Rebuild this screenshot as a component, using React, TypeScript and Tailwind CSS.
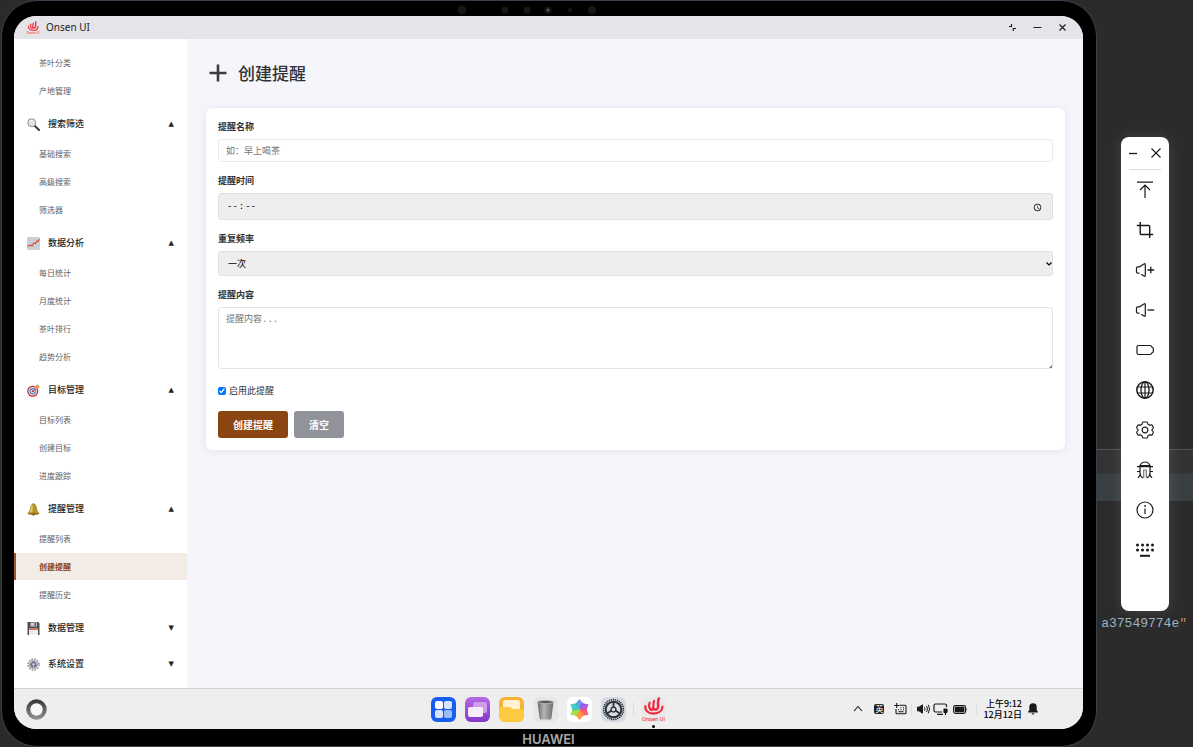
import React from "react";

type MenuGroup = {
  title?: string;
  icon?: React.ReactNode;
  open: boolean;
  items: string[];
};

type ToolProps = {
  label: string;
  children: React.ReactNode;
};

const Emoji = ({ children }: { children: React.ReactNode }) => (
  <svg viewBox="0 0 26 26" className="size-[13px] shrink-0" aria-hidden="true">
    {children}
  </svg>
);

const SearchEmoji = () => (
  <Emoji>
    <path d="M15 15l9 9" stroke="#3a3a3c" strokeWidth="4" strokeLinecap="round" />
    <circle cx="9.5" cy="9.5" r="8" fill="#dfe3e6" stroke="#8d9194" strokeWidth="2" />
    <path d="M5 9a5 5 0 0 1 5-4.5" stroke="#fff" strokeWidth="1.6" fill="none" />
  </Emoji>
);

const ChartEmoji = () => (
  <Emoji>
    <rect width="26" height="26" rx="2" fill="#cdd1dc" />
    <path d="M0 6.500h26M0 13h26M0 19.500h26M6.500 0v26M13 0v26M19.500 0v26" stroke="#c3c8d4" strokeWidth=".8" />
    <path d="M1 19l6-3 3 2 4-6 3 1 3-5 2 1 3-5" stroke="#d8492f" strokeWidth="2.2" fill="none" />
  </Emoji>
);

const TargetEmoji = () => (
  <Emoji>
    <circle cx="11.500" cy="14.500" r="11" fill="#c8262f" />
    <circle cx="11.500" cy="14.500" r="8.500" fill="#f4eef0" />
    <circle cx="11.500" cy="14.500" r="6.300" fill="#3d7fb4" />
    <circle cx="11.500" cy="14.500" r="4" fill="#f4eef0" />
    <circle cx="11.500" cy="14.500" r="2.200" fill="#c8262f" />
    <path d="M11.500 14.500L21 5" stroke="#555b66" strokeWidth="1.6" />
    <path d="M17 5l4-4 1 3 3 1-4 4-4 0z" fill="#ee9445" stroke="#ee9445" strokeWidth="1.500" />
  </Emoji>
);

const BellEmoji = () => (
  <Emoji>
    <circle cx="13" cy="3" r="2.500" fill="#a07a16" />
    <path d="M13 2c5 0 6.500 4 7 9 .4 4 2 7 4.500 8.500v2h-23v-2C4 18 5.600 15 6 11c.5-5 2-9 7-9z" fill="#b8922a" />
    <path d="M9 5c-1.500 3-1 9-4 14h5c2-4 1-9 2-14z" fill="#e2c765" />
    <ellipse cx="13" cy="21.500" rx="11.500" ry="2" fill="#94701a" />
    <circle cx="13" cy="23.500" r="2.200" fill="#7a5a10" />
  </Emoji>
);

const DiskEmoji = () => (
  <Emoji>
    <path d="M1 0h21l3 3v23H1z" fill="#4b4d52" />
    <path d="M7 1h13v8H7z" fill="#c9ccd0" />
    <path d="M15 2h3v6h-3z" fill="#55575c" />
    <path d="M4 13h18v13H4z" fill="#f5f3f2" />
    <path d="M4 13h18v3H4z" fill="#e06a4c" />
    <path d="M6 19h14M6 22.500h14" stroke="#d5d3d2" />
  </Emoji>
);

const GearEmoji = () => (
  <Emoji>
    <circle cx="13" cy="13" r="11" fill="none" stroke="#9496a3" strokeWidth="3" strokeDasharray="3.400 2.350" />
    <circle cx="13" cy="13" r="9" fill="#a4a6b2" />
    <circle cx="13" cy="13" r="5.500" fill="#62658a" />
    <circle cx="13" cy="13" r="2.500" fill="#d3d4dc" />
    <path d="M7 8l4 3M19 8l-4 3M13 19v-3" stroke="#d3d4dc" strokeWidth="1.500" />
  </Emoji>
);

const menu: MenuGroup[] = [
  { open: true, items: ["茶叶分类", "产地管理"] },
  { title: "搜索筛选", icon: <SearchEmoji />, open: true, items: ["基础搜索", "高级搜索", "筛选器"] },
  { title: "数据分析", icon: <ChartEmoji />, open: true, items: ["每日统计", "月度统计", "茶叶排行", "趋势分析"] },
  { title: "目标管理", icon: <TargetEmoji />, open: true, items: ["目标列表", "创建目标", "进度跟踪"] },
  { title: "提醒管理", icon: <BellEmoji />, open: true, items: ["提醒列表", "创建提醒", "提醒历史"] },
  { title: "数据管理", icon: <DiskEmoji />, open: false, items: [] },
  { title: "系统设置", icon: <GearEmoji />, open: false, items: [] },
];

const activeItem = "创建提醒";

const OnsenLogo = ({ className }: { className?: string }) => (
  <svg viewBox="0 0 26 26" className={className} aria-hidden="true">
    <g fill="none" stroke="#f5293d" strokeLinecap="round">
      <path d="M9 6c-1 2-.8 4 .2 6 .8 1.700 2.500 2 3.200.5 1-2.500-.2-5 1.200-8.500" strokeWidth="2.300" />
      <path d="M13.500 12.500c2 1 4 .5 4.300-2C18 7.500 17 5 18.500 1.500" strokeWidth="2.600" />
      <path d="M4.500 9.500c-.5 4.500 3 7.800 8.500 7.800 5.300 0 9.300-2.800 9.300-7.300" strokeWidth="2.200" />
    </g>
    <text x="13" y="25" textAnchor="middle" fontSize="6" fill="#f5293d" fontFamily="Roboto, sans-serif">
      Onsen UI
    </text>
  </svg>
);

const TitleBar = () => (
  <header className="flex h-[23px] items-center bg-[#e5e4e9] pl-3 pr-4">
    <OnsenLogo className="size-[14px]" />
    <span className="ml-[6px] font-['Noto_Sans'] text-[10px] text-[#222]">Onsen UI</span>
    <div className="ml-auto flex items-center gap-4 text-[#222]">
      <button aria-label="还原" className="size-[9px]">
        <svg viewBox="0 0 9 9" fill="none" stroke="currentColor" strokeWidth="1.200">
          <path d="M1 3.500h2.500V1M5.300 8V5.500H8" />
        </svg>
      </button>
      <button aria-label="最小化" className="size-[9px]">
        <svg viewBox="0 0 9 9" stroke="currentColor" strokeWidth="1.200">
          <path d="M.5 4.500h8" />
        </svg>
      </button>
      <button aria-label="关闭" className="size-[9px]">
        <svg viewBox="0 0 9 9" stroke="currentColor" strokeWidth="1.200">
          <path d="M1.500 1.500l6 6M7.500 1.500l-6 6" />
        </svg>
      </button>
    </div>
  </header>
);

const Sidebar = () => (
  <nav className="flex w-[173px] shrink-0 flex-col gap-1 bg-white pt-[10px]">
    {menu.map((group, i) => (
      <div key={i}>
        {group.title && (
          <button className="flex h-8 w-full items-center gap-2 px-[13px] text-[9px] font-medium text-[#222]">
            {group.icon}
            <span>{group.title}</span>
            <span className="ml-auto font-['DejaVu_Sans'] text-[7px]">{group.open ? "▲" : "▼"}</span>
          </button>
        )}
        <ul className="flex flex-col gap-px">
          {group.items.map((item) => (
            <li key={item}>
              <a
                href="#"
                className={
                  item === activeItem
                    ? "flex h-[27px] items-center border-l-2 border-[#a0522d] bg-[#f3ebe6] pl-[23px] text-[8px] font-bold text-[#8b4513]"
                    : "flex h-[27px] items-center border-l-2 border-transparent pl-[23px] text-[8px] text-[#606266]"
                }
              >
                {item}
              </a>
            </li>
          ))}
        </ul>
      </div>
    ))}
  </nav>
);

const ReminderForm = () => (
  <form
    className="flex flex-col gap-3 rounded-md bg-white p-3 text-[9px] text-[#303133] shadow-[0_1px_8px_rgba(0,0,0,0.08)]"
    onSubmit={(e) => e.preventDefault()}
  >
    <div className="flex flex-col gap-[6px]">
      <label htmlFor="name" className="font-bold leading-[13px]">
        提醒名称
      </label>
      <input
        id="name"
        placeholder="如：早上喝茶"
        className="h-[23px] rounded-[3px] border border-[#ebebeb] bg-white px-[7px] placeholder:text-[#757575]"
      />
    </div>
    <div className="flex flex-col gap-[6px]">
      <label htmlFor="time" className="font-bold leading-[13px]">
        提醒时间
      </label>
      <input
        id="time"
        type="time"
        className="h-[27px] rounded-[3px] border border-[#e0e0e0] bg-[#eee] px-[7px] pt-[2px] font-['Liberation_Mono'] text-black [&::-webkit-datetime-edit-ampm-field]:hidden"
      />
    </div>
    <div className="flex flex-col gap-[6px]">
      <label htmlFor="repeat" className="font-bold leading-[13px]">
        重复频率
      </label>
      <div className="relative flex">
        <select
          id="repeat"
          className="h-[25px] w-full appearance-none rounded-[3px] border border-[#e0e0e0] bg-[#eee] pl-[9px] text-black"
        >
          <option>一次</option>
          <option>每天</option>
          <option>每周</option>
        </select>
        <svg
          viewBox="0 0 6 4"
          className="pointer-events-none absolute right-px top-[11px] h-1 w-[6px]"
          fill="none"
          stroke="#000"
          strokeWidth="1.200"
          aria-hidden="true"
        >
          <path d="M.5.5L3 3 5.500.5" />
        </svg>
      </div>
    </div>
    <div className="flex flex-col gap-[6px]">
      <label htmlFor="content" className="font-bold leading-[13px]">
        提醒内容
      </label>
      <div className="relative flex">
        <textarea
          id="content"
          placeholder="提醒内容..."
          className="h-[62px] w-full resize-none rounded-[3px] border border-[#e4e4e4] bg-white px-[7px] py-[6px] font-['Liberation_Mono','Noto_Sans_CJK_SC',monospace] placeholder:text-[#757575]"
        />
        <svg viewBox="0 0 3 3" className="absolute bottom-px right-px size-[3px]" aria-hidden="true">
          <path d="M3 0v3H0z" fill="#777" />
        </svg>
      </div>
    </div>
    <label className="mt-[3px] flex items-center gap-[3px] leading-[13px]">
      <input type="checkbox" defaultChecked className="size-2" />
      启用此提醒
    </label>
    <div className="mt-[2px] flex gap-[6px] text-[10px] font-bold text-white">
      <button className="h-[27px] rounded-[3px] bg-[#8b4513] px-[15px]">创建提醒</button>
      <button type="reset" className="h-[27px] rounded-[3px] bg-[#909399] px-[15px]">
        清空
      </button>
    </div>
  </form>
);

const Dock = () => (
  <footer className="grid h-[41px] grid-cols-[1fr_auto_1fr] items-center border-t border-[#d2d3d6] bg-[#eee]">
    <button aria-label="主页" className="ml-3 size-[21px]">
      <svg viewBox="0 0 21 21">
        <defs>
          <linearGradient id="ring" x1="0" y1="0" x2="0" y2="1">
            <stop offset="0" stopColor="#3c3c3c" />
            <stop offset="1" stopColor="#8c8c8c" />
          </linearGradient>
        </defs>
        <circle cx="10.500" cy="10.500" r="8.200" fill="#f6f6f6" stroke="url(#ring)" strokeWidth="4" />
      </svg>
    </button>
    <div className="flex items-center gap-[7px]">
      <div className="flex items-center gap-[9px]">
        <button aria-label="应用" className="size-[25px]">
          <svg viewBox="0 0 25 25">
            <rect width="25" height="25" rx="6" fill="#175ef0" />
            <rect x="4" y="4" width="8" height="8" rx="2" fill="#fff" />
            <rect x="13" y="4" width="8" height="8" rx="2" fill="#d7e4fd" />
            <rect x="4" y="13" width="8" height="8" rx="2" fill="#d7e4fd" />
            <rect x="13" y="13" width="8" height="8" rx="2" fill="#9dbdf9" />
          </svg>
        </button>
        <button aria-label="多任务" className="size-[25px]">
          <svg viewBox="0 0 25 25">
            <defs>
              <linearGradient id="purple" x1="0" y1="0" x2="0" y2="1">
                <stop offset="0" stopColor="#b56ae6" />
                <stop offset="1" stopColor="#8238c8" />
              </linearGradient>
            </defs>
            <rect width="25" height="25" rx="6" fill="url(#purple)" />
            <rect x="8" y="5" width="14" height="11" rx="2" fill="#cf9cee" />
            <rect x="3" y="10" width="15" height="10" rx="2" fill="#f8edfd" />
          </svg>
        </button>
        <button aria-label="文件" className="size-[25px]">
          <svg viewBox="0 0 25 25">
            <rect width="25" height="25" rx="6" fill="#f6b32d" />
            <path d="M4 5q0-2 2-2h13q2 0 2 2v9H4z" fill="#fff3d3" />
            <path d="M0 11q0-1 1-1h10l3 2h11v7a6 6 0 0 1-6 6H6a6 6 0 0 1-6-6z" fill="#ffc93f" />
          </svg>
        </button>
        <button aria-label="回收站" className="size-[25px]">
          <svg viewBox="0 0 25 25">
            <defs>
              <linearGradient id="bin">
                <stop offset="0" stopColor="#686868" />
                <stop offset=".4" stopColor="#b5b5b5" />
                <stop offset="1" stopColor="#6c6c6c" />
              </linearGradient>
            </defs>
            <rect width="25" height="25" rx="6" fill="#e6e6e6" />
            <path d="M4.500 5l2 16q.2 1.500 1.700 1.500h8.600q1.500 0 1.700-1.500l2-16z" fill="url(#bin)" />
            <ellipse cx="12.500" cy="5" rx="8" ry="1.500" fill="#555" stroke="#bcbcbc" strokeWidth=".8" />
          </svg>
        </button>
        <button aria-label="图库" className="size-[25px]">
          <svg viewBox="-12.500 -12.500 25 25">
            <rect x="-12.500" y="-12.500" width="25" height="25" rx="6" fill="#fff" />
            <path d="M0 0L-4-4.500Q-4.500-6-3-7L0-10.500 3-7Q4.500-6 4-4.500z" fill="#5a8df0" opacity=".9" />
            <path d="M0 0L-4-4.500Q-4.500-6-3-7L0-10.500 3-7Q4.500-6 4-4.500z" fill="#a04ce8" opacity=".9" transform="rotate(60)" />
            <path d="M0 0L-4-4.500Q-4.500-6-3-7L0-10.500 3-7Q4.500-6 4-4.500z" fill="#ff4a6b" opacity=".9" transform="rotate(120)" />
            <path d="M0 0L-4-4.500Q-4.500-6-3-7L0-10.500 3-7Q4.500-6 4-4.500z" fill="#ff8f2b" opacity=".9" transform="rotate(180)" />
            <path d="M0 0L-4-4.500Q-4.500-6-3-7L0-10.500 3-7Q4.500-6 4-4.500z" fill="#a3d936" opacity=".9" transform="rotate(240)" />
            <path d="M0 0L-4-4.500Q-4.500-6-3-7L0-10.500 3-7Q4.500-6 4-4.500z" fill="#30c8c0" opacity=".9" transform="rotate(300)" />
          </svg>
        </button>
        <button aria-label="设置" className="size-[25px]">
          <svg viewBox="-12.500 -12.500 25 25" fill="none">
            <rect x="-12.500" y="-12.500" width="25" height="25" rx="6" fill="#d6dbe2" />
            <circle r="9.900" stroke="#2b3038" strokeWidth="1.600" strokeDasharray="1.300 .773" />
            <circle r="7.800" stroke="#2b3038" strokeWidth="2" />
            <circle r="2.400" stroke="#2b3038" strokeWidth="1.400" />
            <path d="M0-2.500V-7M2.200 1.300L6.500 4M-2.200 1.300L-6.500 4" stroke="#2b3038" strokeWidth="1.800" />
          </svg>
        </button>
      </div>
      <span className="h-[14px] w-px bg-[#dcdcdc]" />
      <button aria-label="Onsen UI" className="relative size-[25px] rounded-md bg-[#e9e9e9]">
        <OnsenLogo className="size-[25px]" />
        <span className="absolute -bottom-[6px] left-[11px] size-[3px] rounded-full bg-black" />
      </button>
    </div>
    <div className="flex items-center justify-end pr-[45px] text-[#1a1a1a]">
      <svg viewBox="0 0 10 10" className="size-[10px]" fill="none" stroke="currentColor" strokeWidth="1.100">
        <path d="M1 7l4-4.500L9 7" />
      </svg>
      <span className="ml-[11px] flex size-[10px] items-center justify-center rounded-[2px] bg-[#222] text-[8px] leading-none text-white">
        英
      </span>
      <svg viewBox="0 0 13 12" className="ml-[10px] h-3 w-[13px]" fill="none" stroke="currentColor" strokeWidth="1.100">
        <path d="M5.500 2.200H11q1 0 1 1v6.600q0 1-1 1H3q-1 0-1-1V6" />
        <path d="M2.700 0v5M.2 2.500h5" />
        <path d="M6.500 4.800h1M9 4.800h1M4 6.700h1M6.500 6.700h1M9 6.700h1M4.500 8.800h5" />
      </svg>
      <span className="ml-1 h-3 w-px bg-[#dcdcdc]" />
      <svg viewBox="0 0 13 10" className="ml-[5px] h-[10px] w-[13px]" fill="none" stroke="currentColor">
        <path d="M0 3.200h2L5.500.8v8.400L2 6.800H0z" fill="currentColor" />
        <path d="M7.500 3.300q1 1.700 0 3.400M9.500 2q2 3 0 6M11.300.8q2.500 4.200 0 8.400" />
      </svg>
      <svg viewBox="0 0 15 12" className="ml-[3px] h-3 w-[15px]" fill="none" stroke="currentColor" strokeWidth="1.200">
        <path d="M13.500 4V2.500Q13.500 1 12 1H2.500Q1 1 1 2.500v5Q1 9 2.500 9H9M4 11.300h6" />
        <rect x="11" y="6" width="3" height="3.500" rx=".5" fill="currentColor" />
        <path d="M12.500 9.500V12" />
      </svg>
      <svg viewBox="0 0 15 9" className="ml-[5px] h-[9px] w-[15px]">
        <rect x=".6" y=".6" width="12" height="7.800" rx="1.800" fill="none" stroke="currentColor" strokeWidth="1.100" />
        <rect x="1.800" y="1.800" width="9.600" height="5.400" rx=".8" fill="currentColor" />
        <path d="M13.500 3q1.300 1.500 0 3z" fill="currentColor" />
      </svg>
      <span className="ml-2 h-3 w-px bg-[#dcdcdc]" />
      <div className="ml-[6px] flex flex-col items-end text-[9px] font-medium leading-[11px] text-black">
        <span>上午9:12</span>
        <span>12月12日</span>
      </div>
      <svg viewBox="0 0 10 12" className="ml-[6px] h-3 w-[10px]" fill="currentColor">
        <path d="M5 .3a3.700 3.700 0 0 1 3.700 3.800V7l1.200 1.800v.8H.1v-.8L1.300 7V4.100A3.700 3.700 0 0 1 5 .3zM3.500 10.300h3a1.500 1.300 0 0 1-3 0z" />
      </svg>
    </div>
  </footer>
);

const Tool = ({ label, children }: ToolProps) => (
  <button aria-label={label} className="flex h-10 items-center justify-center">
    <svg viewBox="-10 -10 20 20" className="size-5" fill="none" stroke="currentColor" strokeWidth="1.200">
      {children}
    </svg>
  </button>
);

const ToolPanel = () => (
  <aside className="relative flex flex-col rounded-lg bg-white pb-[41px] text-[#1a1a1a] shadow-[0_0_14px_rgba(255,255,255,0.12)]">
    <div className="mx-2 flex h-[33px] items-center justify-between border-b border-[#dedede]">
      <button aria-label="最小化" className="size-2">
        <svg viewBox="0 0 8 8" stroke="currentColor" strokeWidth="1.300">
          <path d="M0 4.500h8" />
        </svg>
      </button>
      <button aria-label="关闭" className="size-[10px]">
        <svg viewBox="0 0 10 10" stroke="currentColor" strokeWidth="1.100">
          <path d="M.5.5l9 9M9.500.5l-9 9" />
        </svg>
      </button>
    </div>
    <Tool label="置顶">
      <path d="M-8-7.800H8M0 8V-4.500M-5 0L0-5 5 0" />
    </Tool>
    <Tool label="截图">
      <path d="M-4.800-8v11.500q0 1 1 1H8.200M-8.200-4.500H3.700q1 0 1 1V8" strokeWidth="1.400" />
    </Tool>
    <Tool label="音量加">
      <path d="M-5.500 3.200h-1.800q-1.200 0-1.200-1.200v-4q0-1.200 1.200-1.200h1.800L-1-6Q.3-6.800.3-5.300V5.300Q.3 6.800-1 6l-2.800-1.800" />
      <path d="M2.500 0h6.700M5.800-3.300v6.600" strokeWidth="1.300" />
    </Tool>
    <Tool label="音量减">
      <path d="M-5.500 3.200h-1.800q-1.200 0-1.200-1.200v-4q0-1.200 1.200-1.200h1.800L-1-6Q.3-6.800.3-5.300V5.300Q.3 6.800-1 6l-2.800-1.800" />
      <path d="M2.500 0h6.700" strokeWidth="1.300" />
    </Tool>
    <Tool label="电池">
      <path d="M-6.500-4.500H5q1.500 0 1.700 1.500l1.600 1v4l-1.600 1Q6.500 4.500 5 4.500H-6.500Q-8 4.500-8 3v-6q0-1.500 1.500-1.500z" />
    </Tool>
    <Tool label="网络">
      <circle r="8.200" strokeWidth="1.500" />
      <ellipse rx="4" ry="8.200" strokeWidth="1.300" />
      <path d="M0-8V8M-7.700-3H7.700M-7.700 3H7.700" />
    </Tool>
    <Tool label="设置">
      <path
        d="M-1.800-8h3.600q.9 0 1.100.9l.3 1.300q1.200.5 2 1.100l1.300-.4q.9-.3 1.400.5l1 1.700q.4.900-.3 1.500L7.600-.5v1l1 .9q.7.600.3 1.500l-1 1.700q-.5.800-1.400.5l-1.300-.4q-.8.600-2 1.100L2.900 7.100q-.2.900-1.100.9h-3.600q-.9 0-1.100-.9l-.3-1.300q-1.200-.5-2-1.100l-1.300.4q-.9.300-1.400-.5l-1-1.700q-.4-.9.300-1.500l1-.9v-1l-1-.9q-.7-.6-.3-1.500l1-1.700q.5-.8 1.400-.5l1.300.4q.8-.6 2-1.100l.3-1.300q.2-.9 1.100-.9z"
        transform="scale(.92 1)"
      />
      <circle r="2.900" />
    </Tool>
    <Tool label="调试">
      <path d="M-5-4.500Q-3.500-8 0-8t5 3.500zM-8-3.300H8M-5-3.300V3q0 3.500 3 5M5-3.300V3q0 3.500-3 5" />
      <path d="M-1.300 8V0h2.600v8" stroke="#777" />
      <path d="M-8 1.500h3M8 1.500H5M-4.500 4.500L-7 7.800M4.500 4.500L7 7.800" />
    </Tool>
    <Tool label="信息">
      <circle r="8" />
      <path d="M0-1.500V4" />
      <circle cy="-4" r=".9" fill="currentColor" stroke="none" />
    </Tool>
    <Tool label="键盘">
      <path
        d="M-7.500-5h.01M-2.500-5h.01M2.500-5h.01M7.500-5h.01M-7.500 0h.01M-2.500 0h.01M2.500 0h.01M7.500 0h.01"
        strokeWidth="3"
        strokeLinecap="round"
      />
      <path d="M-5 5.800H5" strokeWidth="2" />
    </Tool>
  </aside>
);

const EditorBackdrop = () => (
  <div className="absolute inset-0 overflow-hidden pt-[449px]" aria-hidden="true">
    <div className="h-[25px] border-t border-[#555] bg-[#313335]" />
    <div className="h-[27px] bg-[#3a3f42]" />
    <p className="mt-[113px] flex justify-end whitespace-nowrap pr-[6px] font-['Liberation_Mono'] text-[13px] leading-5 text-[#9fb2c2]">
      a37549774e<span className="text-[#c58a62]">"</span>
    </p>
  </div>
);

const App = () => {
  return (
    <div className="flex min-h-screen bg-[#2b2b2b] pl-px font-['Noto_Sans_CJK_SC',sans-serif]">
      <div className="relative z-10 flex min-w-0 flex-1 flex-col rounded-[36px] border border-[#3a4250] bg-black pl-3 pr-[13px]">
        <div className="flex h-[15px] items-center justify-center pr-11 pt-[2px]">
          <svg viewBox="0 0 140 10" className="h-[10px] w-[140px]" fill="#171717" aria-hidden="true">
            <circle cx="5" cy="5" r="4.200" />
            <circle cx="48" cy="5" r="3.500" />
            <circle cx="70" cy="5" r="3.500" />
            <circle cx="91" cy="5" r="3.500" />
            <circle cx="91" cy="5" r="1.300" fill="#4a6076" />
            <circle cx="113" cy="5" r="2" />
            <circle cx="135" cy="5" r="4.200" />
          </svg>
        </div>
        <div className="flex flex-1 flex-col overflow-hidden rounded-[22px] bg-[#f5f6fb]">
          <TitleBar />
          <div className="flex flex-1">
            <Sidebar />
            <main className="min-w-0 flex-1 pl-[19px] pr-[18px] pt-5">
              <h1 className="mb-[21px] flex items-center gap-[11px] pl-[3px] text-[17px] font-medium leading-7 text-[#303133]">
                <svg viewBox="0 0 18 18" className="size-[18px]" stroke="#3a3b3f" strokeWidth="2.600" aria-hidden="true">
                  <path d="M9 .5v17M.5 9h17" />
                </svg>
                创建提醒
              </h1>
              <ReminderForm />
            </main>
          </div>
          <Dock />
        </div>
        <p className="h-[17px] text-center font-['Inter'] text-[13px] font-semibold leading-5 text-[#a8a8a8]">HUAWEI</p>
      </div>
      <div className="relative w-24 shrink-0 px-6 pt-[137px]">
        <EditorBackdrop />
        <ToolPanel />
      </div>
    </div>
  );
};

export default App;
